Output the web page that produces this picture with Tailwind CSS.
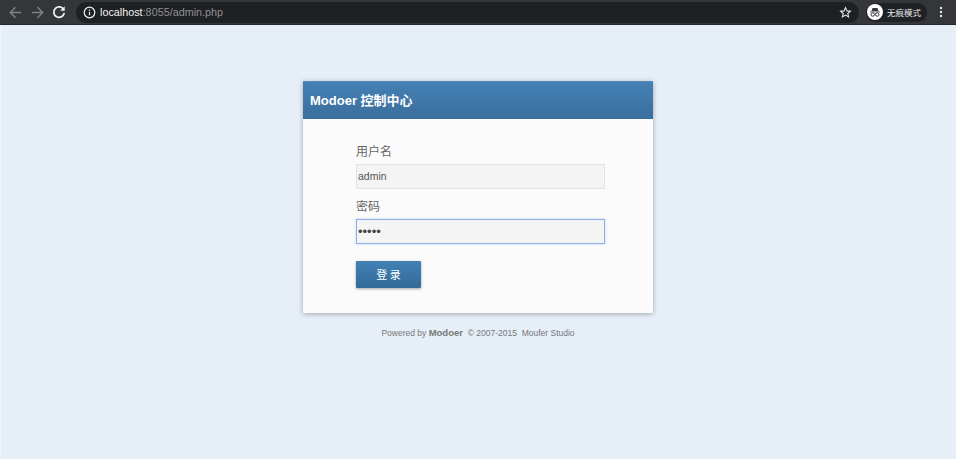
<!DOCTYPE html>
<html><head><meta charset="utf-8"><script src="https://cdn.jsdelivr.net/npm/@tailwindcss/browser@4"></script></head>
<body class="m-0">
<div class="w-[956px] h-[459px] overflow-hidden flex flex-col bg-[#e6eef7] font-['Liberation_Sans','Noto_Sans_CJK_SC',sans-serif]">
  <header class="h-[25px] shrink-0 bg-[#35363a] flex items-center border-b border-[#26272a]">
    <div class="flex items-center gap-[7px] pl-[8px] w-[76px]">
      <svg width="15" height="15" viewBox="0 0 16 16" fill="none" stroke="#7f8185" stroke-width="1.6"><path d="M14 8H2.500M8 2.500 2.500 8 8 13.500"/></svg>
      <svg width="15" height="15" viewBox="0 0 16 16" fill="none" stroke="#7f8185" stroke-width="1.600"><path d="M2 8h11.500M8 2.500 13.500 8 8 13.500"/></svg>
      <svg width="14" height="14" viewBox="0 0 16 16" fill="none" stroke="#f1f3f4" stroke-width="2"><path d="M13.500 5.500A6 6 0 1 0 14 9"/><path d="M14.500 1.500v5h-5" fill="#f1f3f4" stroke="none"/></svg>
    </div>
    <div class="w-[783px] h-[21px] rounded-full bg-[#1f2023] flex items-center pl-[7px] pr-[7px]">
      <svg width="13" height="13" viewBox="0 0 16 16" fill="none" stroke="#f1f3f4" stroke-width="1.500"><circle cx="8" cy="8" r="6.500"/><path d="M8 7v4.500M8 4.200v1.600"/></svg>
      <span class="ml-[4px] text-[10.800px] leading-none text-[#f1f3f4]">localhost<span class="text-[#8f9195]">:8055/admin.php</span></span>
      <svg class="ml-auto" width="13" height="13" viewBox="0 0 24 24" fill="none" stroke="#e8eaed" stroke-width="2"><path d="m12 3 2.700 6 6.300.6-4.800 4.200 1.500 6.400L12 16.800 6.300 20.200l1.500-6.400L3 9.600 9.300 9z"/></svg>
    </div>
    <div class="ml-[7px] h-[19px] w-[61px] rounded-full bg-[#202124] flex items-center gap-[4px] pl-[1px]">
      <span class="w-[16px] h-[16px] rounded-full bg-white flex items-center justify-center">
        <svg width="12" height="12" viewBox="0 0 24 24" fill="#35363a"><path d="M7 4h10l2 6H5zM2 11h20v1.500H2z"/><circle cx="7.500" cy="17" r="3.500" fill="none" stroke="#35363a" stroke-width="2"/><circle cx="16.500" cy="17" r="3.500" fill="none" stroke="#35363a" stroke-width="2"/></svg>
      </span>
      <span class="text-[8.500px] leading-none text-[#e8eaed] font-['Noto_Sans_CJK_SC',sans-serif]">无痕模式</span>
    </div>
    <svg class="ml-[12px]" width="4" height="12" viewBox="0 0 4 12" fill="#e8eaed"><circle cx="2" cy="2" r="1.200"/><circle cx="2" cy="6" r="1.200"/><circle cx="2" cy="10" r="1.200"/></svg>
  </header>
  <main class="flex-1 flex flex-col items-center pt-[56px] border-l border-[#f0f4fa]">
    <section class="-ml-px w-[350px] h-[232px] bg-[#fbfbfb] shadow-[0_1px_5px_rgba(0,0,0,0.3)]">
      <h1 class="h-[38px] flex items-center pl-[7px] text-[13px] font-bold text-white bg-gradient-to-b from-[#4580b4] to-[#3a6f9d] border-t border-[#5a8fbd]">Modoer 控制中心</h1>
      <form class="pl-[53px] pt-[24px] flex flex-col">
        <label class="text-[12px] leading-[18px] text-[#666]">用户名</label>
        <div class="mt-[3px] w-[249px] h-[25px] bg-[#f4f4f4] border border-[#e3e3e3] flex items-center pl-[1px] text-[10.500px] text-[#555]">admin</div>
        <label class="mt-[9px] text-[12px] leading-[18px] text-[#666]">密码</label>
        <div class="mt-[3px] w-[249px] h-[25px] bg-[#f4f4f4] border border-[#8fb0e8] shadow-[0_0_2px_rgba(120,160,230,0.5)] flex items-center pl-[1px] text-[#444] text-[13px] leading-none">•••••</div>
        <button type="button" class="mt-[17px] w-[65px] h-[27px] rounded-[1px] text-[11px] text-white bg-gradient-to-b from-[#4280b5] to-[#336b98] shadow-[0_1px_3px_rgba(0,0,0,0.35)] font-['Noto_Sans_CJK_SC',sans-serif]">登 录</button>
      </form>
    </section>
    <footer class="-ml-px mt-[13px] text-[8.500px] leading-[14px] text-[#777] whitespace-pre">Powered by <b class="text-[9.500px]">Modoer</b>  © 2007-2015  Moufer Studio</footer>
  </main>
</div>
</body></html>
